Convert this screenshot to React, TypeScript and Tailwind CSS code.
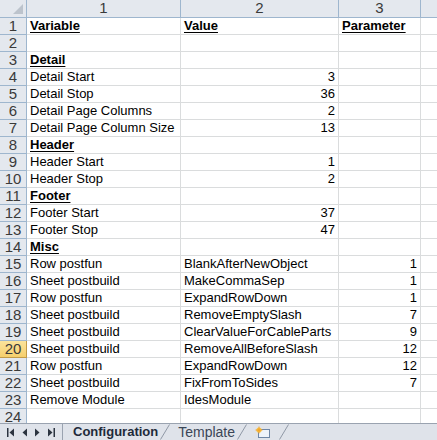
import React from "react";

type Row = {
  a?: string;
  b?: string;
  c?: string;
  head?: boolean;
  bNum?: boolean;
};

const rows: Row[] = [
  { a: "Variable", b: "Value", c: "Parameter", head: true },
  {},
  { a: "Detail", head: true },
  { a: "Detail Start", b: "3", bNum: true },
  { a: "Detail Stop", b: "36", bNum: true },
  { a: "Detail Page Columns", b: "2", bNum: true },
  { a: "Detail Page Column Size", b: "13", bNum: true },
  { a: "Header", head: true },
  { a: "Header Start", b: "1", bNum: true },
  { a: "Header Stop", b: "2", bNum: true },
  { a: "Footer", head: true },
  { a: "Footer Start", b: "37", bNum: true },
  { a: "Footer Stop", b: "47", bNum: true },
  { a: "Misc", head: true },
  { a: "Row postfun", b: "BlankAfterNewObject", c: "1" },
  { a: "Sheet postbuild", b: "MakeCommaSep", c: "1" },
  { a: "Row postfun", b: "ExpandRowDown", c: "1" },
  { a: "Sheet postbuild", b: "RemoveEmptySlash", c: "7" },
  { a: "Sheet postbuild", b: "ClearValueForCableParts", c: "9" },
  { a: "Sheet postbuild", b: "RemoveAllBeforeSlash", c: "12" },
  { a: "Row postfun", b: "ExpandRowDown", c: "12" },
  { a: "Sheet postbuild", b: "FixFromToSides", c: "7" },
  { a: "Remove Module", b: "IdesModule" },
  {},
];

const font = { fontFamily: '"Liberation Sans", Arial, sans-serif' };

const cell =
  "h-[17px] border-b border-r border-[#dadcdd] bg-white px-[3px] leading-[16px] whitespace-nowrap overflow-hidden";
const hdr =
  "h-[17px] border-b border-r border-[#9eb6ce] bg-[#e4e8ee] text-center text-[15px] leading-[16px] text-[#3a3a3a]";

function Slant() {
  return (
    <svg width="10" height="16" viewBox="0 0 10 16" className="shrink-0">
      <path d="M0.5 15.5 L9.5 0.5" stroke="#8f98a6" strokeWidth="1" fill="none" />
    </svg>
  );
}

export default function App() {
  return (
    <div
      className="flex h-[440px] w-[437px] flex-col overflow-hidden bg-white text-[13px] text-black"
      style={font}
    >
      <div className="grid flex-1 grid-cols-[27px_154px_158px_82px_1fr] content-start overflow-hidden">
        <div className="relative h-[18px] border-b border-r border-[#9eb6ce] bg-[#e4e8ee]">
          <svg width="10" height="10" viewBox="0 0 10 10" className="absolute bottom-[3px] right-[3px]">
            <path d="M10 0 L10 10 L0 10 Z" fill="#bcc3cc" />
          </svg>
        </div>
        <div className={`${hdr} h-[18px]`}>1</div>
        <div className={`${hdr} h-[18px]`}>2</div>
        <div className={`${hdr} h-[18px]`}>3</div>
        <div className={`${hdr} h-[18px] border-r-0`}></div>

        {rows.map((r, i) => {
          const n = i + 1;
          const sel = n === 20;
          const txt = r.head ? "font-bold underline underline-offset-[2px]" : "";
          return (
            <React.Fragment key={n}>
              <div
                className={
                  sel
                    ? "h-[17px] border-b border-r border-[#c29b48] bg-gradient-to-b from-[#fbe39b] to-[#f6cf6c] text-center text-[15px] leading-[16px] text-[#3a3a3a]"
                    : hdr
                }
              >
                {n}
              </div>
              <div className={`${cell} ${txt}`}>{r.a}</div>
              <div className={`${cell} ${r.bNum ? "text-right" : ""} ${r.head ? txt : ""}`}>{r.b}</div>
              <div className={`${cell} ${r.head ? txt : "text-right"}`}>{r.c}</div>
              <div className={`${cell} border-r-0`}></div>
            </React.Fragment>
          );
        })}
      </div>

      <div className="flex h-[17px] shrink-0 items-end border-t border-[#9aa3b0] bg-[#dfe3ea] text-[13px]">
        <div className="flex h-full w-[63px] items-center justify-around border-r border-[#9aa3b0] px-[4px] text-[#2c3440]">
          <svg width="8" height="9" viewBox="0 0 8 9">
            <rect x="0" y="0" width="1.5" height="9" fill="#2c3440" />
            <path d="M7 0.5 L2.5 4.5 L7 8.5 Z" fill="#2c3440" />
          </svg>
          <svg width="6" height="9" viewBox="0 0 6 9">
            <path d="M5 0.5 L0.5 4.5 L5 8.5 Z" fill="#2c3440" />
          </svg>
          <svg width="6" height="9" viewBox="0 0 6 9">
            <path d="M1 0.5 L5.5 4.5 L1 8.5 Z" fill="#2c3440" />
          </svg>
          <svg width="8" height="9" viewBox="0 0 8 9">
            <path d="M1 0.5 L5.5 4.5 L1 8.5 Z" fill="#2c3440" />
            <rect x="6.5" y="0" width="1.5" height="9" fill="#2c3440" />
          </svg>
        </div>
        <div className="flex h-full items-center pl-[10px] pr-[2px] font-bold text-[#1e2a3a]">Configuration</div>
        <Slant />
        <div className="flex h-full items-center pl-[8px] pr-[2px] text-[14px] text-[#3b4657]">Template</div>
        <Slant />
        <div className="flex h-full items-center px-[8px]">
          <svg width="16" height="13" viewBox="0 0 16 13">
            <rect x="3.5" y="3.5" width="11" height="8" fill="#eef3fa" stroke="#6f87a6" />
            <circle cx="4" cy="4" r="2.6" fill="#f6c24a" />
            <path d="M4 0.5 V7.5 M0.5 4 H7.5" stroke="#f39a1b" strokeWidth="0.8" />
          </svg>
        </div>
        <Slant />
      </div>
    </div>
  );
}
